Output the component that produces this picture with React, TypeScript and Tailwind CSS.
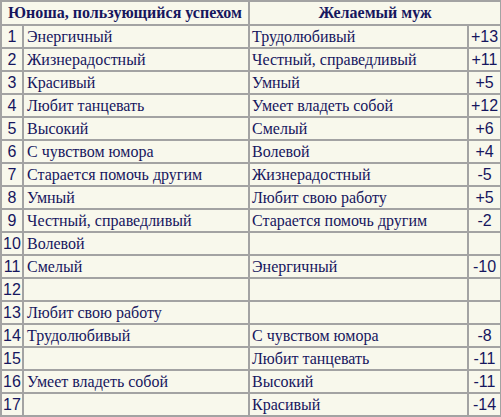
import React from "react";

const rows: [string, string, string, string][] = [
  ["1", "Энергичный", "Трудолюбивый", "+13"],
  ["2", "Жизнерадостный", "Честный, справедливый", "+11"],
  ["3", "Красивый", "Умный", "+5"],
  ["4", "Любит танцевать", "Умеет владеть собой", "+12"],
  ["5", "Высокий", "Смелый", "+6"],
  ["6", "С чувством юмора", "Волевой", "+4"],
  ["7", "Старается помочь другим", "Жизнерадостный", "-5"],
  ["8", "Умный", "Любит свою работу", "+5"],
  ["9", "Честный, справедливый", "Старается помочь другим", "-2"],
  ["10", "Волевой", "", ""],
  ["11", "Смелый", "Энергичный", "-10"],
  ["12", "", "", ""],
  ["13", "Любит свою работу", "", ""],
  ["14", "Трудолюбивый", "С чувством юмора", "-8"],
  ["15", "", "Любит танцевать", "-11"],
  ["16", "Умеет владеть собой", "Высокий", "-11"],
  ["17", "", "Красивый", "-14"],
];

export default function App() {
  return (
    <div className="w-[501px] h-[417px] bg-white font-['Liberation_Serif',serif]">
      <table className="border-collapse bg-[#f8f8ec] text-[#16165e] w-[500px] table-fixed border-2 border-[#a3a3a3]">
        <colgroup>
          <col className="w-[22px]" />
          <col className="w-[226px]" />
          <col className="w-[219px]" />
          <col className="w-[33px]" />
        </colgroup>
        <thead>
          <tr className="h-[24px]">
            <th colSpan={2} className="border-2 border-[#a3a3a3] text-center text-[16px] font-bold p-0 leading-none whitespace-nowrap font-['Liberation_Serif',serif]">
              Юноша, пользующийся успехом
            </th>
            <th colSpan={2} className="border-2 border-[#a3a3a3] text-center text-[16px] font-bold p-0 leading-none whitespace-nowrap font-['Liberation_Serif',serif]">
              Желаемый муж
            </th>
          </tr>
        </thead>
        <tbody>
          {rows.map((r) => (
            <tr key={r[0]} className="h-[23px]">
              <td className="border-2 border-[#a3a3a3] text-center text-[16px] p-0 leading-none font-['Liberation_Sans',sans-serif]">
                {r[0]}
              </td>
              <td className="border-2 border-[#a3a3a3] text-[16px] pl-[3px] p-0 leading-none whitespace-nowrap font-['Liberation_Serif',serif]">
                {r[1]}
              </td>
              <td className="border-2 border-[#a3a3a3] text-[16px] pl-[2px] p-0 leading-none whitespace-nowrap font-['Liberation_Serif',serif]">
                {r[2]}
              </td>
              <td className="border-2 border-[#a3a3a3] text-center text-[16px] p-0 leading-none font-['Liberation_Sans',sans-serif]">
                {r[3]}
              </td>
            </tr>
          ))}
        </tbody>
      </table>
    </div>
  );
}
